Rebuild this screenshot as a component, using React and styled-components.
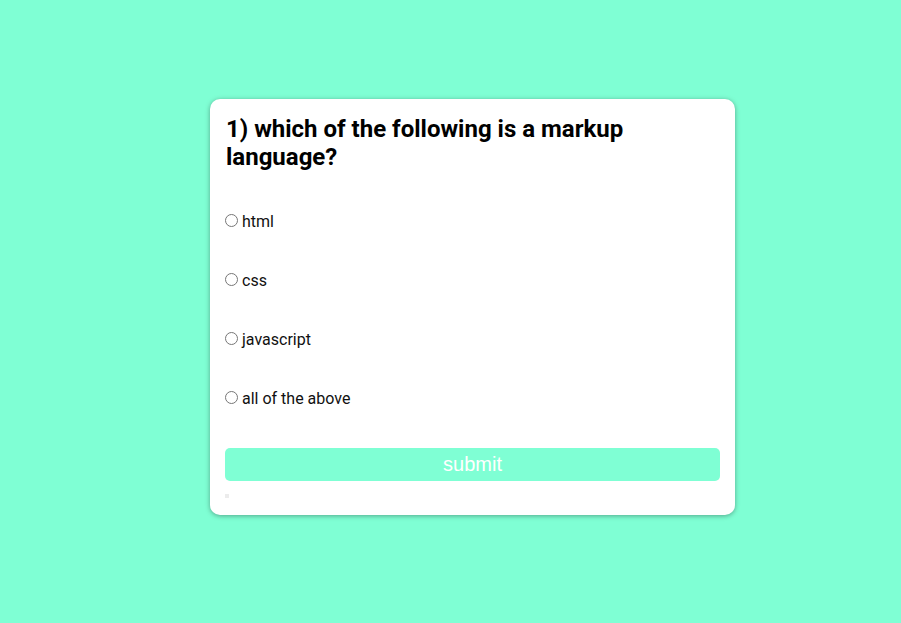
import React from "react";
import styled, { createGlobalStyle } from "styled-components";

const Global = createGlobalStyle`
  html, body { margin: 0; padding: 0; }
  body {
    background: #7fffd4;
    font-family: Roboto, "Noto Sans", sans-serif;
    min-height: 623px;
  }
`;

const Page = styled.main`
  padding: 99px 0 0 210px;
`;

const Card = styled.section`
  box-sizing: border-box;
  width: 525px;
  background: #fff;
  border-radius: 10px;
  box-shadow: 0 1px 5px rgba(0, 0, 0, 0.35);
  padding: 16px 15px 17px;
  display: flex;
  flex-direction: column;
`;

const Question = styled.h2`
  margin: 0;
  padding-left: 1px;
  font-size: 24px;
  font-weight: 700;
  line-height: 28px;
  color: #000;
`;

const Options = styled.ul`
  list-style: none;
  margin: 41px 0 0;
  padding: 0;
  display: flex;
  flex-direction: column;
  gap: 40px;
`;

const Option = styled.li`
  display: flex;
  align-items: center;
  font-size: 16px;
  line-height: 19px;
  color: #111;
`;

const Radio = styled.input`
  width: 13px;
  height: 13px;
  margin: -3px 4px 0 0;
`;

const Submit = styled.button`
  margin-top: 40px;
  height: 33px;
  border: none;
  border-radius: 5px;
  background: #7fffd4;
  color: #fff;
  font-family: "Liberation Sans", Arial, sans-serif;
  font-size: 20px;
  padding: 0;
  cursor: pointer;
`;

const Result = styled.div`
  margin-top: 13px;
  width: 4px;
  height: 4px;
  background: #ececec;
`;

const answers = ["html", "css", "javascript", "all of the above"];

export default function App() {
  return (
    <>
      <Global />
      <Page>
        <Card>
          <Question>1) which of the following is a markup language?</Question>
          <Options>
            {answers.map((a, i) => (
              <Option key={a}>
                <Radio type="radio" name="answer" id={`a${i}`} />
                <label htmlFor={`a${i}`}>{a}</label>
              </Option>
            ))}
          </Options>
          <Submit>submit</Submit>
          <Result />
        </Card>
      </Page>
    </>
  );
}
